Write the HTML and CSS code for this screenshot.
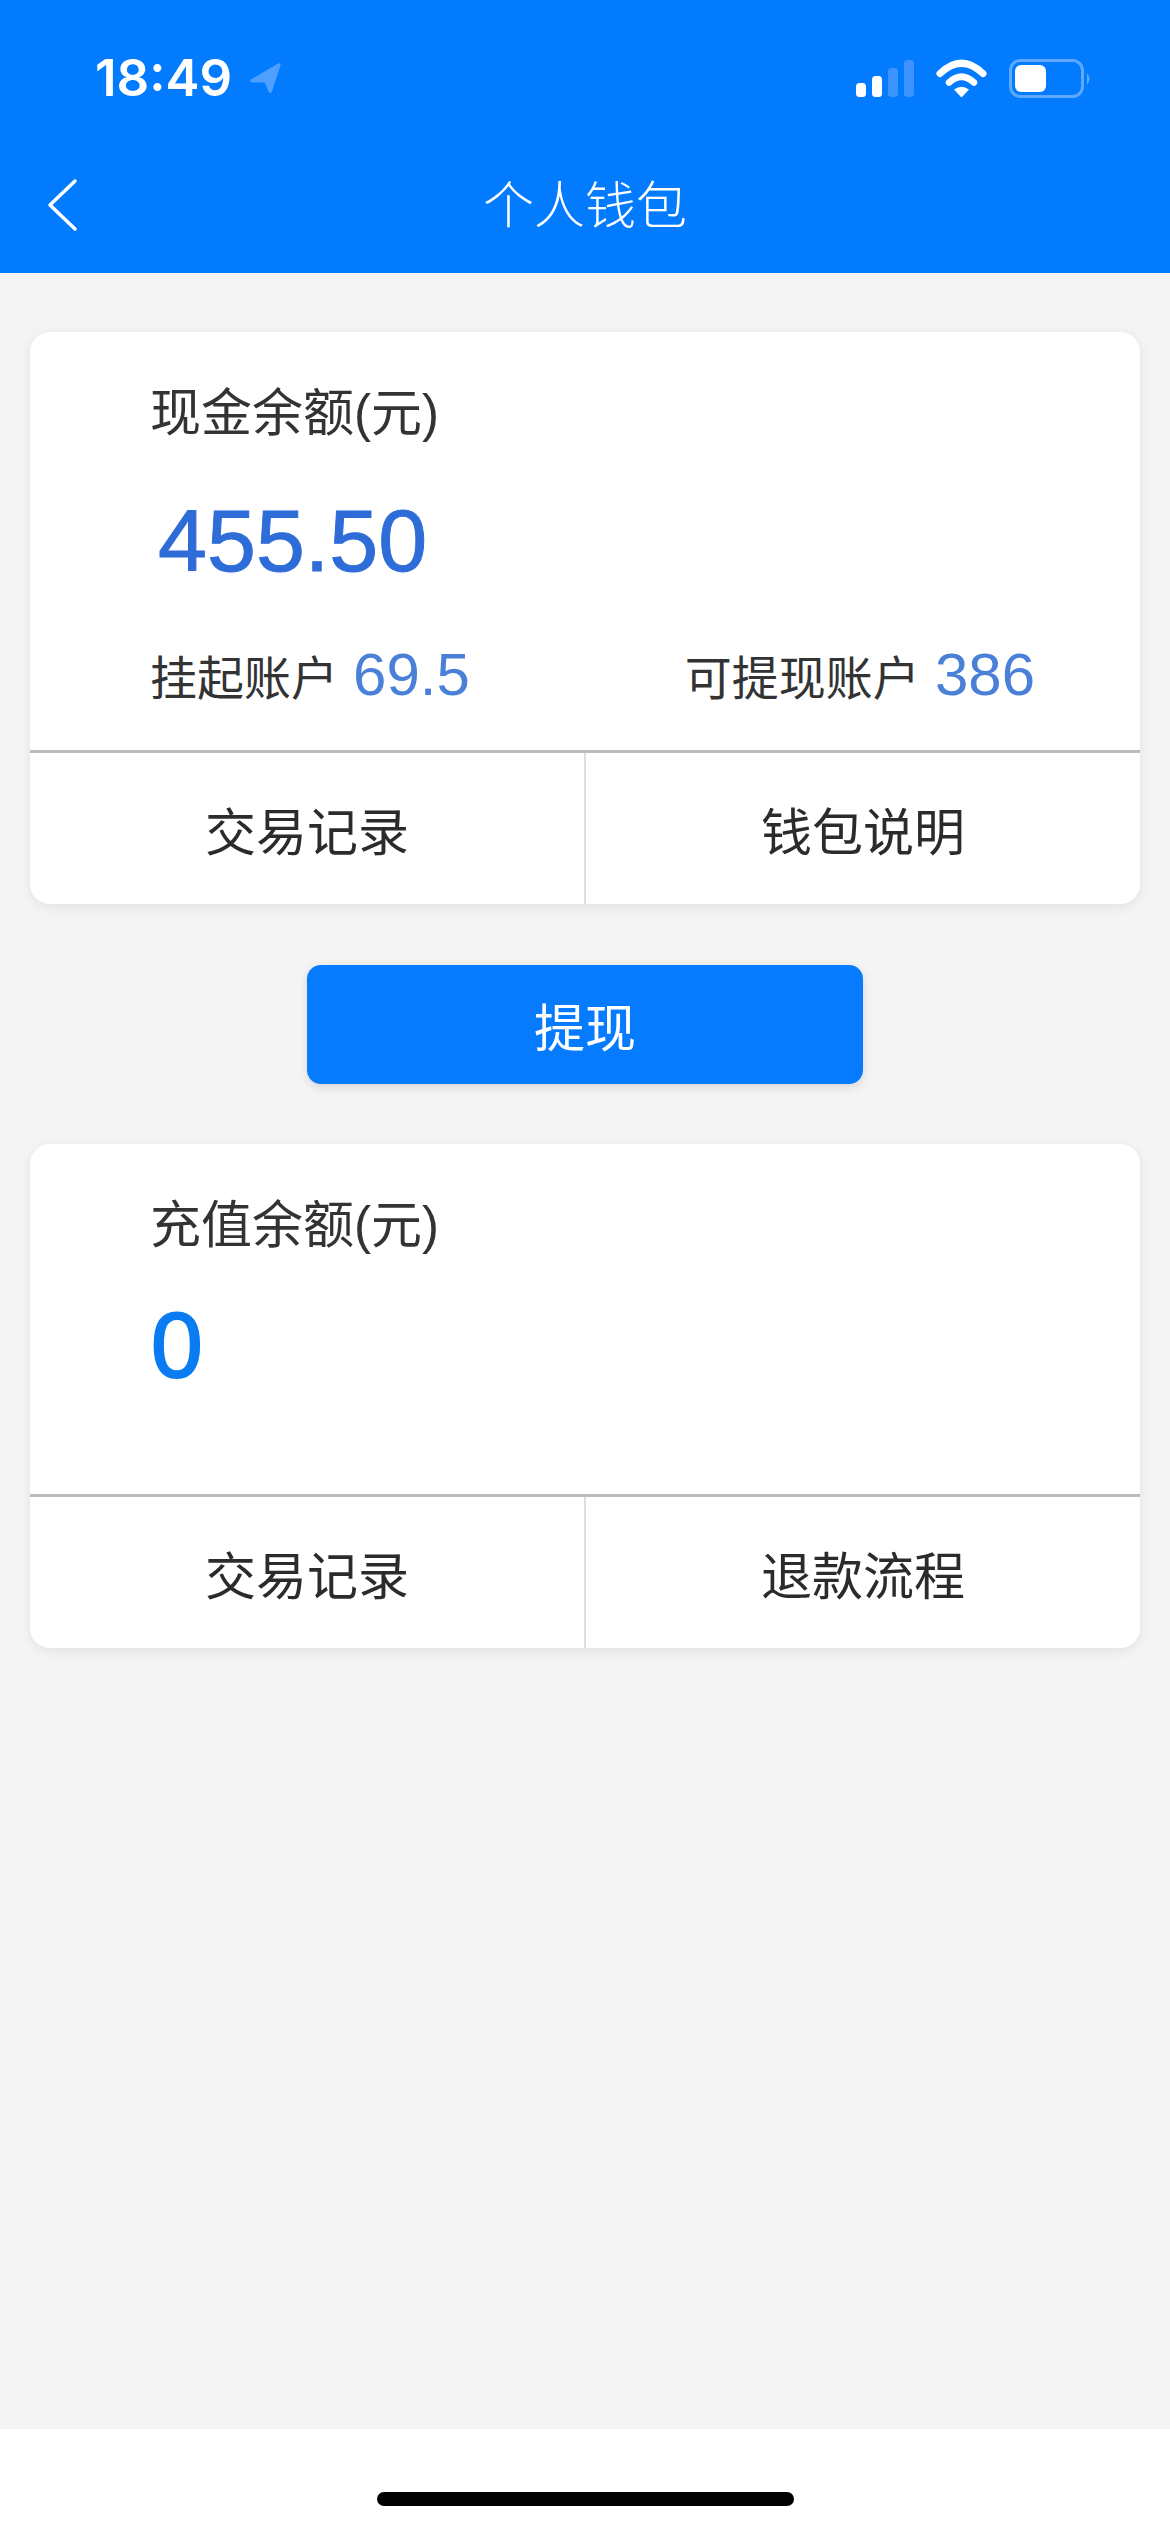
FILE: index.html
```html
<!DOCTYPE html>
<html lang="zh-CN">
<head>
    <meta charset="UTF-8">
    <meta name="viewport" content="width=device-width, initial-scale=1.0">
    <title>个人钱包</title>
    <link rel="stylesheet" href="styles.css">
</head>
<body>
    <header class="header">
        <div class="status-bar">
            <div class="status-left">
                <span class="time">18:49</span>
                <svg class="location" width="32" height="32" viewBox="0 0 32 32">
                    <path d="M2 17.500 29 1.500Q32 0.500 31.500 3.500L23 29.500Q21.500 33 19.500 29.500L15.500 20.500 3 20.500Q-0.500 19 2 17.500Z" fill="#4f9fff"/>
                </svg>
            </div>
            <svg class="status-icons" width="240" height="40" viewBox="0 0 240 40">
                <!-- signal -->
                <rect x="0" y="24" width="10" height="14" rx="3.500" fill="#fff"/>
                <rect x="16" y="17" width="10" height="21" rx="3.500" fill="#fff"/>
                <rect x="32" y="9" width="10" height="29" rx="3.500" fill="#3d94ff"/>
                <rect x="48" y="1" width="10" height="37" rx="3.500" fill="#3d94ff"/>
                <!-- wifi -->
                <path d="M84 13.500Q105.500 -7 127 13.500" fill="none" stroke="#fff" stroke-width="7" stroke-linecap="round" transform="translate(0 1)"/>
                <path d="M93 23.500Q105.500 12 118 23.500" fill="none" stroke="#fff" stroke-width="6.500" stroke-linecap="round"/>
                <path d="M98 30.500Q105.500 25 113 30.500L106.500 37.500Q105.500 38.500 104.500 37.500Z" fill="#fff"/>
                <!-- battery -->
                <rect x="154.500" y="1.500" width="72" height="36" rx="10" fill="none" stroke="#5ea8ff" stroke-width="3"/>
                <rect x="159" y="6" width="31" height="27" rx="6" fill="#fff"/>
                <path d="M231 14Q236 19.500 231 26Z" fill="#5ea8ff"/>
            </svg>
        </div>
        <div class="nav-bar">
            <svg class="back" width="34" height="54" viewBox="0 0 34 54">
                <path d="M30 3 5 27 30 51" fill="none" stroke="#fff" stroke-width="3.500" stroke-linecap="round" stroke-linejoin="round"/>
            </svg>
            <h1 class="nav-title">个人钱包</h1>
        </div>
    </header>

    <main class="content">
        <section class="card">
            <div class="card-body cash">
                <p class="card-label">现金余额(元)</p>
                <p class="amount cash-amount">455.50</p>
                <div class="stats">
                    <span class="stat">挂起账户 <b>69.5</b></span>
                    <span class="stat">可提现账户 <b>386</b></span>
                </div>
            </div>
            <div class="card-actions">
                <a class="action">交易记录</a>
                <a class="action">钱包说明</a>
            </div>
        </section>

        <button class="withdraw">提现</button>

        <section class="card">
            <div class="card-body recharge">
                <p class="card-label">充值余额(元)</p>
                <p class="amount recharge-amount">0</p>
            </div>
            <div class="card-actions">
                <a class="action">交易记录</a>
                <a class="action">退款流程</a>
            </div>
        </section>
    </main>

    <footer class="home-area">
        <div class="home-bar"></div>
    </footer>
</body>
</html>
```

FILE: styles.css
```css
* {
    box-sizing: border-box;
}
html, body {
    margin: 0;
    height: 2532px;
}
body {
    display: flex;
    flex-direction: column;
    background-color: #f4f4f5;
    color: #333;
    font-family: "Liberation Sans", "Noto Sans CJK SC", sans-serif;
    overflow: hidden;
}
p, h1 {
    margin: 0;
}

.header {
    height: 273px;
    background-color: #027bff;
    color: #fff;
}
.status-bar {
    display: flex;
    justify-content: space-between;
    align-items: flex-start;
    height: 157px;
    padding: 59px 74px 0 95px;
}
.status-left {
    display: flex;
    align-items: center;
    gap: 17px;
}
.time {
    font-family: Inter, sans-serif;
    font-size: 51px;
    font-weight: 600;
    line-height: 38px;
}
.status-icons {
    display: block;
}
.nav-bar {
    position: relative;
    display: flex;
    justify-content: center;
    align-items: flex-start;
    height: 116px;
}
.back {
    position: absolute;
    left: 45px;
    top: 21px;
}
.nav-title {
    font-size: 51px;
    font-weight: 300;
    line-height: 100px;
}

.content {
    flex: 1;
    display: flex;
    flex-direction: column;
    align-items: center;
    padding: 59px 30px 0;
}
.card {
    width: 100%;
    background-color: #fff;
    border-radius: 20px;
    box-shadow: 0 3px 12px rgba(0, 0, 0, 0.08);
    overflow: hidden;
}
.card-body {
    display: flex;
    flex-direction: column;
    padding: 52px 0 0 120px;
    border-bottom: 3px solid #bcbcbc;
}
.card-body.cash {
    height: 421px;
}
.card-body.recharge {
    height: 353px;
}
.card-label {
    font-size: 51px;
    line-height: 60px;
    font-weight: 400;
    color: #333;
}
.amount {
    line-height: 100px;
}
.cash-amount {
    margin-top: 47px;
    padding-left: 8px;
    font-size: 88px;
    color: #2e6cd8;
    -webkit-text-stroke: 1px #2e6cd8;
}
.recharge-amount {
    margin-top: 39px;
    padding-left: 1px;
    font-size: 93px;
    color: #0a7cf2;
    -webkit-text-stroke: 2px #0a7cf2;
}
.stats {
    display: flex;
    justify-content: space-between;
    margin-top: 49px;
    padding-right: 105px;
}
.stat {
    font-size: 47px;
    font-weight: 400;
    line-height: 70px;
}
.stat b {
    margin-left: 2px;
    font-size: 60px;
    font-weight: 400;
    color: #4b80d8;
}
.card-actions {
    display: flex;
    height: 151px;
}
.action {
    flex: 1;
    display: flex;
    justify-content: center;
    align-items: center;
    font-size: 51px;
    font-weight: 400;
    color: #2b2b2b;
}
.action + .action {
    border-left: 2px solid #dedede;
}

.withdraw {
    width: 556px;
    height: 119px;
    margin: 61px 0 60px;
    background-color: #077bfd;
    color: #fff;
    border: none;
    border-radius: 14px;
    box-shadow: 0 3px 10px rgba(0, 0, 0, 0.12);
    font-family: inherit;
    font-size: 51px;
    font-weight: 400;
}

.home-area {
    display: flex;
    justify-content: center;
    height: 103px;
    padding-top: 63px;
    background-color: #fff;
}
.home-bar {
    width: 417px;
    height: 14px;
    background-color: #000;
    border-radius: 7px;
}
```
